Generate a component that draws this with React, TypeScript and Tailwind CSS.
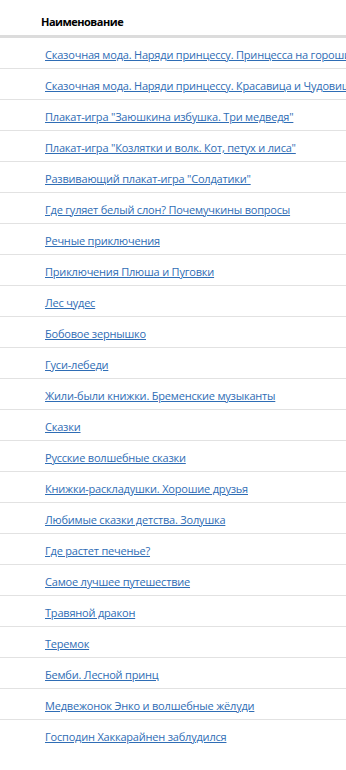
import React from 'react';

const titles = [
  'Сказочная мода. Наряди принцессу. Принцесса на горошине',
  'Сказочная мода. Наряди принцессу. Красавица и Чудовище',
  'Плакат-игра "Заюшкина избушка. Три медведя"',
  'Плакат-игра "Козлятки и волк. Кот, петух и лиса"',
  'Развивающий плакат-игра "Солдатики"',
  'Где гуляет белый слон? Почемучкины вопросы',
  'Речные приключения',
  'Приключения Плюша и Пуговки',
  'Лес чудес',
  'Бобовое зернышко',
  'Гуси-лебеди',
  'Жили-были книжки. Бременские музыканты',
  'Сказки',
  'Русские волшебные сказки',
  'Книжки-раскладушки. Хорошие друзья',
  'Любимые сказки детства. Золушка',
  'Где растет печенье?',
  'Самое лучшее путешествие',
  'Травяной дракон',
  'Теремок',
  'Бемби. Лесной принц',
  'Медвежонок Энко и волшебные жёлуди',
  'Господин Хаккарайнен заблудился',
];

export default function App() {
  return (
    <div className="w-[346px] h-[770px] overflow-hidden bg-white font-['Open_Sans',sans-serif] text-[11px] leading-[15px] tracking-[-0.2px]">
      <div className="h-[38px] flex items-end pb-[6px] pl-[41px] border-b-[3px] border-[#dcdcdc]">
        <span className="font-bold text-black whitespace-nowrap tracking-[-0.5px]">Наименование</span>
      </div>
      {titles.map((t, i) => (
        <div
          key={i}
          className={`h-[31px] flex items-center pt-[2px] pl-[45px] ${i < titles.length - 1 ? 'border-b border-[#e2e2e2]' : ''}`}
        >
          <a href="#" className="text-[#2f6db5] underline whitespace-nowrap">
            {t}
          </a>
        </div>
      ))}
    </div>
  );
}
